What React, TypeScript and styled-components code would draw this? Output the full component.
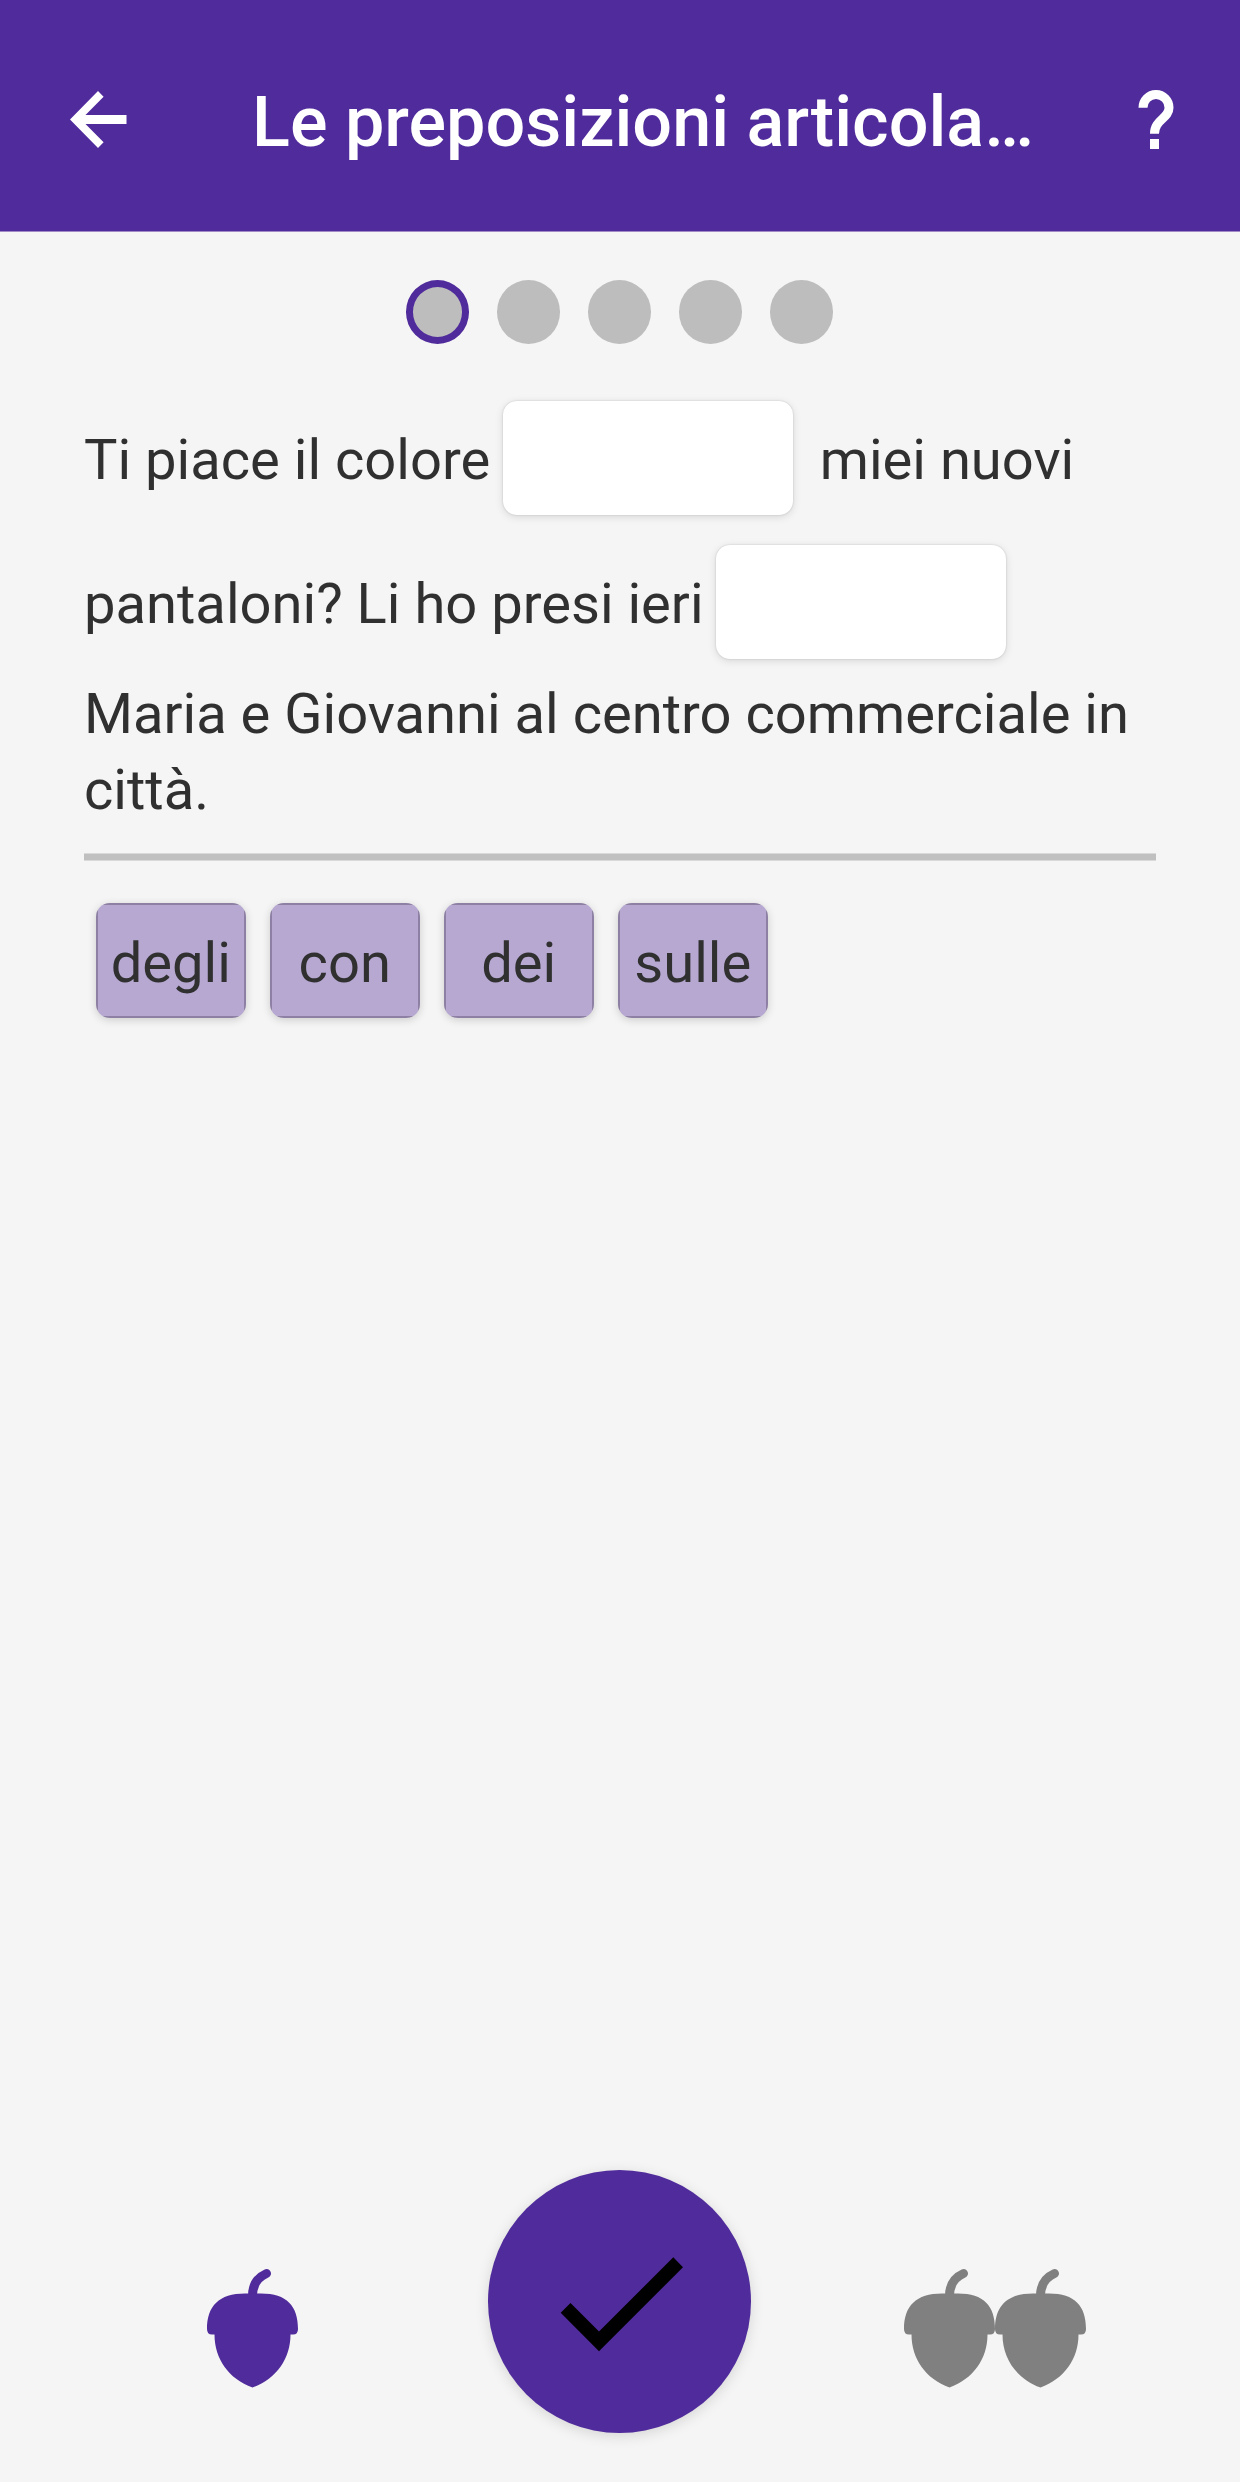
import React from "react";
import styled, { createGlobalStyle } from "styled-components";

const GlobalStyle = createGlobalStyle`
  * { box-sizing: border-box; }
  body { margin: 0; background: #f5f5f5; }
`;

const Screen = styled.div`
  width: 1240px;
  height: 2482px;
  display: flex;
  flex-direction: column;
  background: #f5f5f5;
  color: #303030;
  font-family: Roboto, "Liberation Sans", sans-serif;
  font-size: 56.12px;
  overflow: hidden;
`;

const TopBar = styled.header`
  flex: none;
  height: 232px;
  display: flex;
  align-items: flex-start;
  padding: 82px 58px 0 60px;
  border-bottom: 1px solid #a08bc6;
  background: #502b9b;
  background-clip: padding-box;
  color: #fff;
`;

const IconButton = styled.button`
  flex: none;
  width: 76px;
  height: 76px;
  padding: 0;
  border: 0;
  background: none;
  color: inherit;
  svg { display: block; }
`;

const Title = styled.h1`
  flex: 1;
  margin: 0 0 0 116px;
  font-size: 70.15px;
  font-weight: 500;
  line-height: 80px;
  white-space: nowrap;
`;

const Steps = styled.nav`
  flex: none;
  display: flex;
  justify-content: center;
  gap: 28px;
  margin-top: 48px;
  padding-right: 1px;
`;

const Step = styled.span<{ $current?: boolean }>`
  width: 63px;
  height: 63.5px;
  border-radius: 50%;
  background: #bdbdbd;
  border: ${(p) => (p.$current ? "7px solid #502b9b" : "0")};
`;

const Exercise = styled.main`
  flex: 1;
  display: flex;
  flex-direction: column;
  padding: 56.5px 84px 0;
`;

const Line = styled.div<{ $height: number; $gap?: number }>`
  flex: none;
  display: flex;
  align-items: center;
  height: ${(p) => p.$height}px;
  margin-top: ${(p) => p.$gap ?? 0}px;
  line-height: 76px;
  white-space: pre;
`;

const Text = styled.span`
  padding-top: 4px;
`;

const Blank = styled.span`
  width: 290px;
  height: 114px;
  margin: 0 27px 0 12.500px;
  border-radius: 14px;
  background: #fff;
  box-shadow: 0 0 2px rgba(0, 0, 0, 0.18), 0 2px 9px rgba(0, 0, 0, 0.12);
`;

const Divider = styled.hr`
  flex: none;
  width: 100%;
  height: 8px;
  margin: 25px 0 0;
  border: solid #d9d9d9;
  border-width: 1px 0;
  background: #c0c0c0;
`;

const WordBank = styled.div`
  display: flex;
  gap: 24px;
  padding: 42px 12px 0;
`;

/* Straight edge lines are painted as backgrounds so the rounded corners cut them off. */
const Word = styled.button`
  width: 150px;
  height: 115px;
  padding: 4px 0.5px 0 0;
  border: 0;
  border-radius: 14px;
  background:
    linear-gradient(#8d80a4, #8d80a4) top / 100% 2px no-repeat,
    linear-gradient(#8d80a4, #8d80a4) bottom / 100% 2px no-repeat,
    linear-gradient(#8d80a4, #8d80a4) left / 2px 100% no-repeat,
    linear-gradient(#8d80a4, #8d80a4) right / 2px 100% no-repeat,
    #b7a8d2;
  color: #303030;
  font: inherit;
  white-space: nowrap;
  box-shadow: 0 2px 9px rgba(0, 0, 0, 0.17);
`;

const Footer = styled.footer`
  flex: none;
  display: flex;
  height: 312px;
`;

const Level = styled.div<{ $left: number; $width: number; $color: string }>`
  flex: none;
  display: flex;
  width: ${(p) => p.$width}px;
  margin-left: ${(p) => p.$left}px;
  padding-top: 98px;
  color: ${(p) => p.$color};
  svg { display: block; flex: none; }
`;

const Submit = styled.button`
  flex: none;
  width: 263px;
  height: 263px;
  margin-left: 190px;
  padding: 0;
  border: 0;
  border-radius: 50%;
  background: #502b9b;
  box-shadow: 0 3px 14px rgba(0, 0, 0, 0.13);
  svg { display: block; }
`;

const Acorn = () => (
  <svg width="91" height="120" viewBox="0 0 91 120">
    <path d="M45.500 28 C45.500 17 50.500 9.500 59.500 5.500" fill="none" stroke="currentColor" strokeWidth="9" strokeLinecap="round" />
    <path
      d="M38 25.500 H54 C80 25.500 91 38 91 61 Q91 66.500 86 66.500 H83.500 C83.500 91 69 111 45.500 119.500 C22 111 7.500 91 7.500 66.500 H5 Q0 66.500 0 61 C0 38 12 25.500 38 25.500Z"
      fill="currentColor"
    />
  </svg>
);

const words = ["degli", "con", "dei", "sulle"];

export default function App() {
  return (
    <Screen>
      <GlobalStyle />
      <TopBar>
        <IconButton aria-label="Indietro">
          <svg width="76" height="76" viewBox="0 0 76 76">
            <path d="M66.500 33H25.500L43.600 14.700L38 9L10 37.500L38 66L43.600 60.300L25.500 42H66.500Z" fill="#fff" />
          </svg>
        </IconButton>
        <Title>Le preposizioni articola…</Title>
        <IconButton aria-label="Aiuto">
          <svg width="76" height="76" viewBox="0 0 76 76">
            <path
              d="M37 25.700C37 18.500 42.800 12.600 50 12.600S63 18.500 63 25.700C63 36.500 48.500 37.500 48.500 51.700"
              fill="none"
              stroke="#fff"
              strokeWidth="9"
            />
            <path d="M44 57H53V67H44Z" fill="#fff" />
          </svg>
        </IconButton>
      </TopBar>
      <Steps>
        <Step $current />
        <Step />
        <Step />
        <Step />
        <Step />
      </Steps>
      <Exercise>
        <Line $height={115}>
          <Text>Ti piace il colore</Text>
          <Blank />
          <Text>miei nuovi</Text>
        </Line>
        <Line $height={115} $gap={29}>
          <Text>pantaloni? Li ho presi ieri</Text>
          <Blank />
        </Line>
        <Line $height={76} $gap={17}>Maria e Giovanni al centro commerciale in</Line>
        <Line $height={76}>città.</Line>
        <Divider />
        <WordBank>
          {words.map((w) => (
            <Word key={w}>{w}</Word>
          ))}
        </WordBank>
      </Exercise>
      <Footer>
        <Level $left={207} $width={91} $color="#502b9b">
          <Acorn />
        </Level>
        <Submit aria-label="Conferma">
          <svg width="263" height="263" viewBox="488 2170 263 263">
            <path d="M560.700 2312.700L570.500 2303L599 2331.500L673.300 2257.300L683 2267.200L599 2351.300Z" fill="#000" />
          </svg>
        </Submit>
        <Level $left={153} $width={182} $color="#808080">
          <Acorn />
          <Acorn />
        </Level>
      </Footer>
    </Screen>
  );
}
